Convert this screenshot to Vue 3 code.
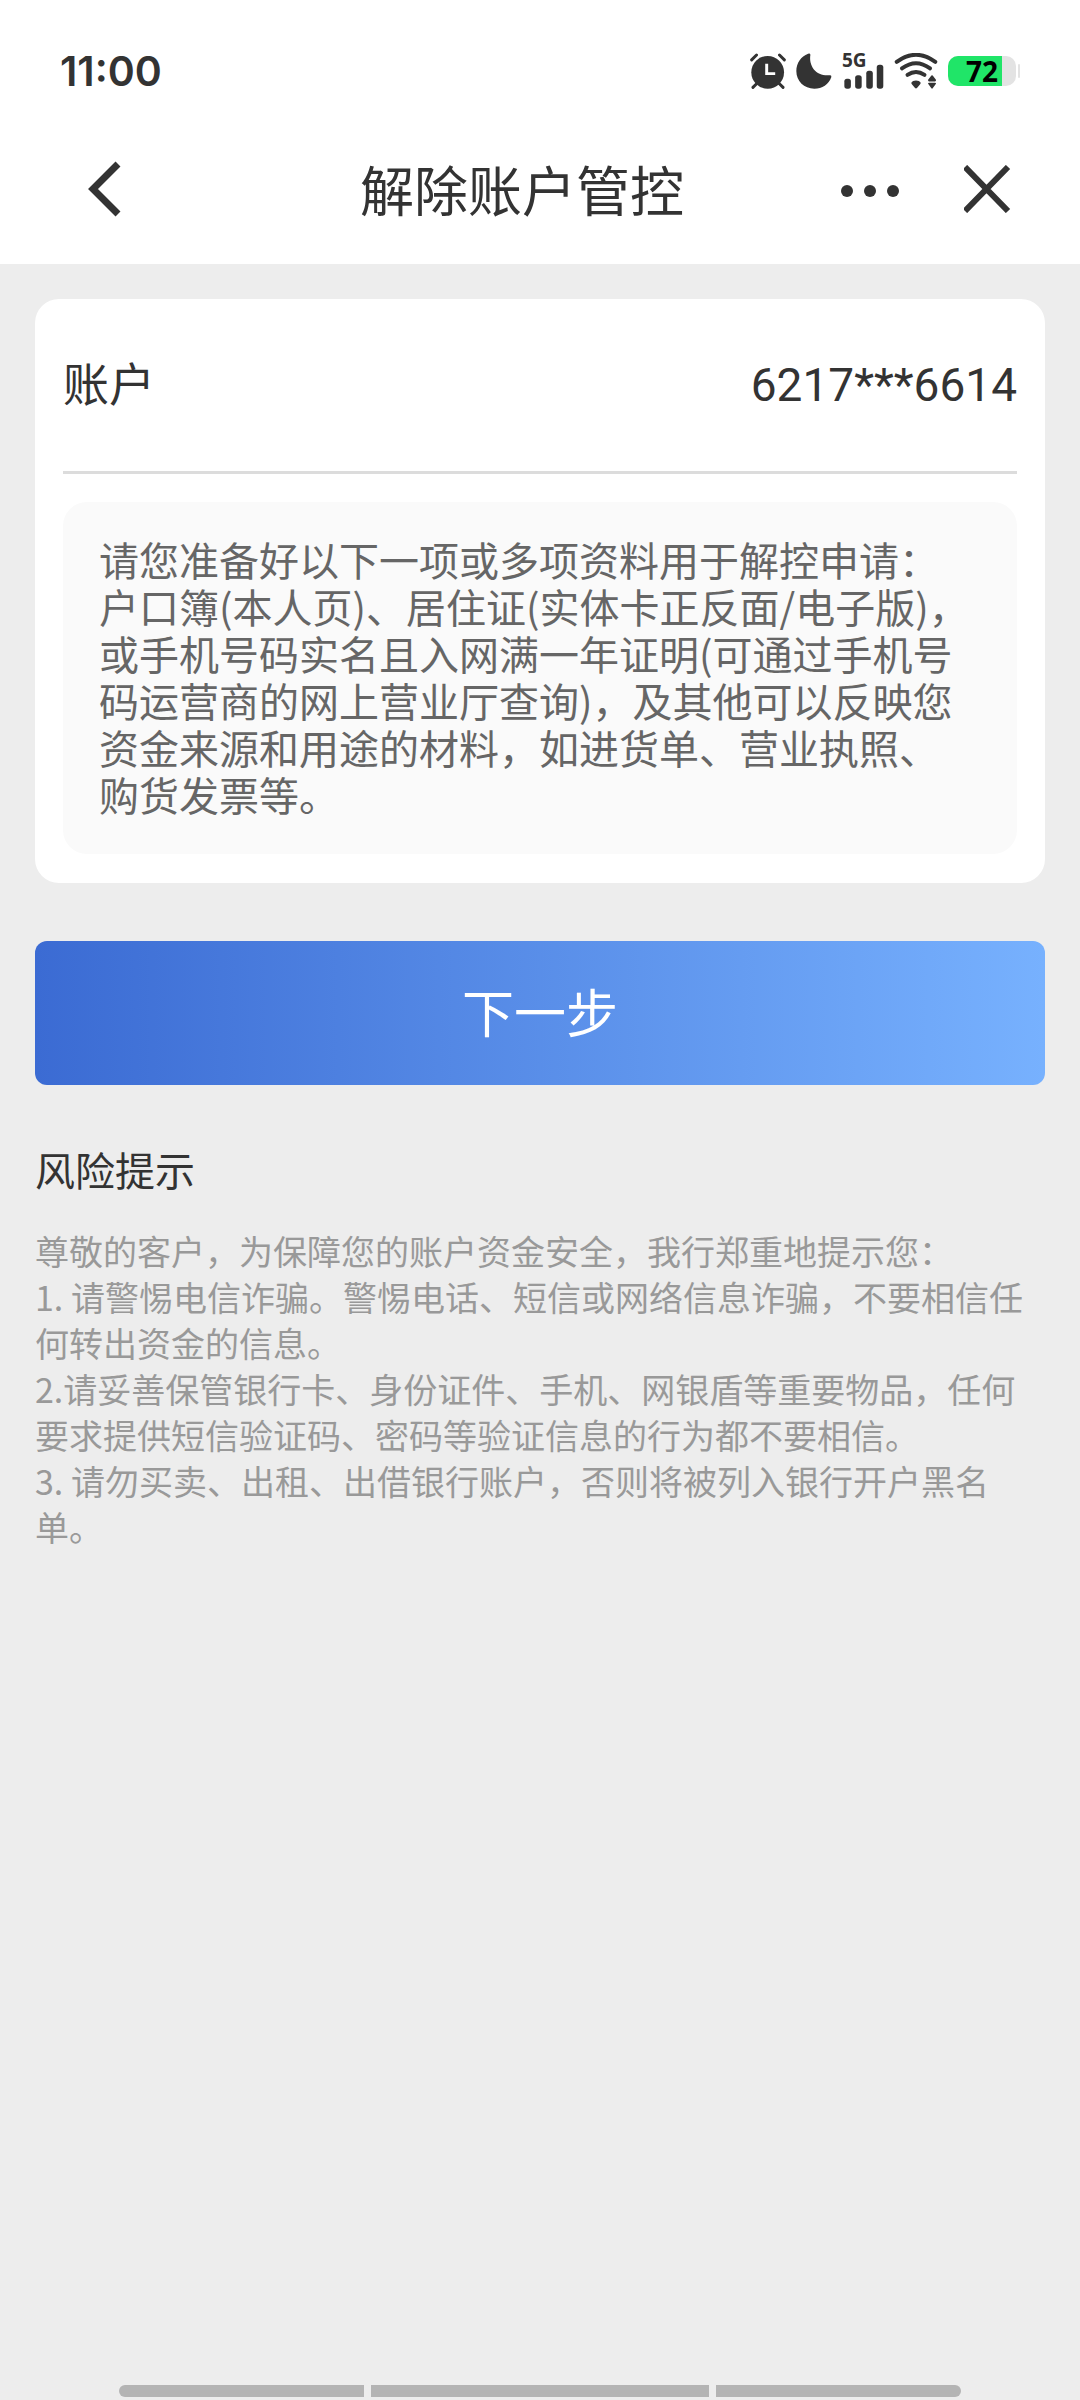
<script setup>
const accountNo = '6217***6614'
const battery = 72
const signalBars = [
  { x: 6, y: 79, h: 30 },
  { x: 39, y: 68, h: 41 },
  { x: 73, y: 54, h: 55 },
  { x: 105, y: 36, h: 73 },
]
const risks = [
  '尊敬的客户，为保障您的账户资金安全，我行郑重地提示您：',
  '1. 请警惕电信诈骗。警惕电话、短信或网络信息诈骗，不要相信任何转出资金的信息。',
  '2.请妥善保管银行卡、身份证件、手机、网银盾等重要物品，任何要求提供短信验证码、密码等验证信息的行为都不要相信。',
  '3. 请勿买卖、出租、出借银行账户，否则将被列入银行开户黑名单。',
]
</script>

<template>
  <div class="page">
    <header class="top">
      <div class="status">
        <time class="clock">11:00</time>
        <div class="status-icons">
          <svg class="alarm" viewBox="0 0 110 110" aria-hidden="true">
            <g fill="none" stroke="#333" stroke-width="9" stroke-linecap="round">
              <path d="M5 21 L20 6 M90 6 L105 21" />
              <path d="M21 93 L9 105 M89 93 L101 105" />
            </g>
            <circle cx="54" cy="59" r="50" fill="#333" />
            <path d="M51 33 V63 H77" fill="none" stroke="#fff" stroke-width="9" />
          </svg>
          <svg class="moon" viewBox="0 0 110 110" aria-hidden="true">
            <path
              d="M37 2 Q43 0 44 5 C38 42 64 72 103 68 Q109 67 108 73 C100 96 80 109 56 109 C25 109 1 86 1 55 C1 31 15 10 37 2 Z"
              fill="#333"
            />
          </svg>
          <div class="signal">
            <span class="net">5G</span>
            <svg class="bars" viewBox="0 0 126 110" aria-hidden="true">
              <rect
                v-for="b in signalBars"
                :key="b.x"
                :x="b.x"
                :y="b.y"
                :height="b.h"
                width="20"
                rx="8"
                fill="#333"
              />
            </svg>
          </div>
          <svg class="wifi" viewBox="0 0 132 110" aria-hidden="true">
            <g fill="none" stroke="#333" stroke-linecap="round" stroke-width="12">
              <path d="M7 27 Q66 -16 125 27" />
              <path d="M23 47 Q66 15 109 47" />
              <path d="M40 67 Q66 49 92 67" />
            </g>
            <path
              d="M66 84 Q77 84 80 90 Q81 93 78 96 L69 107 Q66 110 63 107 L54 96 Q51 93 52 90 Q55 84 66 84 Z"
              fill="#333"
            />
            <path
              d="M113 69 Q115 67 117 69 L127 82 Q128 87 124 87 H106 Q102 87 103 82 Z M103 94 Q102 91 106 91 H124 Q128 91 127 94 L117 108 Q115 110 113 108 Z"
              fill="#333"
            />
          </svg>
          <div class="battery">
            <div class="cell">
              <div class="charge" :style="{ width: battery + 7 + '%' }"></div>
              <span class="level">{{ battery }}</span>
            </div>
            <div class="nub"></div>
          </div>
        </div>
      </div>

      <nav class="nav">
        <button class="icon-btn back" type="button" aria-label="返回">
          <svg width="48" height="60" viewBox="0 0 48 60" aria-hidden="true">
            <path d="M38 5 L13 30 L38 55" fill="none" stroke="#333" stroke-width="7" />
          </svg>
        </button>
        <h1 class="title">解除账户管控</h1>
        <div class="actions">
          <button class="icon-btn" type="button" aria-label="更多">
            <svg width="60" height="48" viewBox="0 0 60 48" aria-hidden="true">
              <g fill="#333">
                <circle cx="7" cy="26" r="6" />
                <circle cx="30" cy="26" r="6" />
                <circle cx="53" cy="26" r="6" />
              </g>
            </svg>
          </button>
          <button class="icon-btn" type="button" aria-label="关闭">
            <svg width="48" height="48" viewBox="0 0 48 48" aria-hidden="true">
              <path d="M1 2 L44 46 M44 2 L1 46" fill="none" stroke="#333" stroke-width="6" />
            </svg>
          </button>
        </div>
      </nav>
    </header>

    <main class="main">
      <section class="card">
        <dl class="account">
          <dt>账户</dt>
          <dd>{{ accountNo }}</dd>
        </dl>
        <p class="tip">
          请您准备好以下一项或多项资料用于解控申请：户口簿(本人页)、居住证(实体卡正反面/电子版)，或手机号码实名且入网满一年证明(可通过手机号码运营商的网上营业厅查询)，及其他可以反映您资金来源和用途的材料，如进货单、营业执照、购货发票等。
        </p>
      </section>

      <button class="next" type="button">下一步</button>

      <section class="risk">
        <h2>风险提示</h2>
        <p v-for="line in risks" :key="line">{{ line }}</p>
      </section>
    </main>

    <footer class="home-bar">
      <span class="seg"></span>
      <span class="seg wide"></span>
      <span class="seg"></span>
    </footer>
  </div>
</template>

<style>
body {
  background: #ededed;
}
</style>

<style scoped>
.page {
  display: flex;
  flex-direction: column;
  min-height: 100vh;
  background: #ededed;
  color: #333;
  font-family: "Noto Sans CJK SC", sans-serif;
}

h1,
h2,
p,
dl,
dd {
  margin: 0;
  font-weight: 400;
}

button {
  border: 0;
  padding: 0;
  background: none;
  color: inherit;
  font-family: inherit;
}

.top {
  background: #fff;
}

.status {
  display: flex;
  align-items: center;
  justify-content: space-between;
  height: 86px;
  padding: 28px 60px 0;
}

.clock {
  font: 600 41px/48px Inter, sans-serif;
}

.status-icons {
  display: flex;
  align-items: center;
  gap: 10px;
}

.alarm,
.moon {
  width: 36px;
  height: 36px;
}

.signal {
  position: relative;
  width: 42px;
  height: 36px;
}

.bars {
  display: block;
  width: 42px;
  height: 36px;
}

.net {
  position: absolute;
  top: -2px;
  left: 0;
  font: 700 19px/18px "Noto Sans", sans-serif;
}

.wifi {
  width: 44px;
  height: 36px;
}

.battery {
  display: flex;
  align-items: center;
  gap: 2px;
}

.cell {
  position: relative;
  width: 68px;
  height: 30px;
  border-radius: 10px;
  background: #e3e3e3;
}

.charge {
  height: 100%;
  border-radius: 10px 0 0 10px;
  background: #20e568;
}

.level {
  position: absolute;
  inset: 0;
  color: #000;
  font: 700 28px/30px "Noto Sans", sans-serif;
  text-align: center;
}

.nub {
  width: 2px;
  height: 14px;
  border-radius: 1px;
  background: #e3e3e3;
}

.nav {
  display: flex;
  align-items: center;
  height: 150px;
  padding: 0 68px 0 80px;
}

.icon-btn svg {
  display: block;
}

.back {
  width: 124px;
}

.title {
  flex: 1;
  font-size: 54px;
  line-height: 80px;
  text-align: center;
}

.actions {
  display: flex;
  align-items: center;
  gap: 64px;
}

.main {
  flex: 1;
  padding: 35px;
}

.card {
  padding: 0 28px 29px;
  border-radius: 24px;
  background: #fff;
}

.account {
  display: flex;
  align-items: baseline;
  justify-content: space-between;
  padding: 48px 0 52px;
  border-bottom: 3px solid #dcdcdc;
  font-size: 46px;
  line-height: 68px;
}

.account dd {
  font-family: Roboto, sans-serif;
}

.tip {
  margin-top: 28px;
  padding: 34px 40px 36px 36px;
  border-radius: 24px;
  background: #fafafa;
  color: #666;
  font-size: 40px;
  line-height: 47px;
}

.next {
  display: block;
  width: 100%;
  height: 144px;
  margin-top: 58px;
  padding-bottom: 6px;
  border-radius: 12px;
  background: linear-gradient(90deg, #3b6bd3, #77b1fe);
  color: #fff;
  font-size: 52px;
}

.risk {
  margin-top: 54px;
  color: #999;
  font-size: 34px;
  line-height: 46px;
}

.risk h2 {
  margin-bottom: 29px;
  color: #333;
  font-size: 40px;
  line-height: 60px;
}

.home-bar {
  display: flex;
  gap: 7px;
  padding: 0 11% 3px;
}

.seg {
  flex: 245;
  height: 12px;
  background: #b4b4b4;
}

.wide {
  flex: 338;
}

.seg:first-child {
  border-radius: 6px 0 0 6px;
}

.seg:last-child {
  border-radius: 0 6px 6px 0;
}
</style>
